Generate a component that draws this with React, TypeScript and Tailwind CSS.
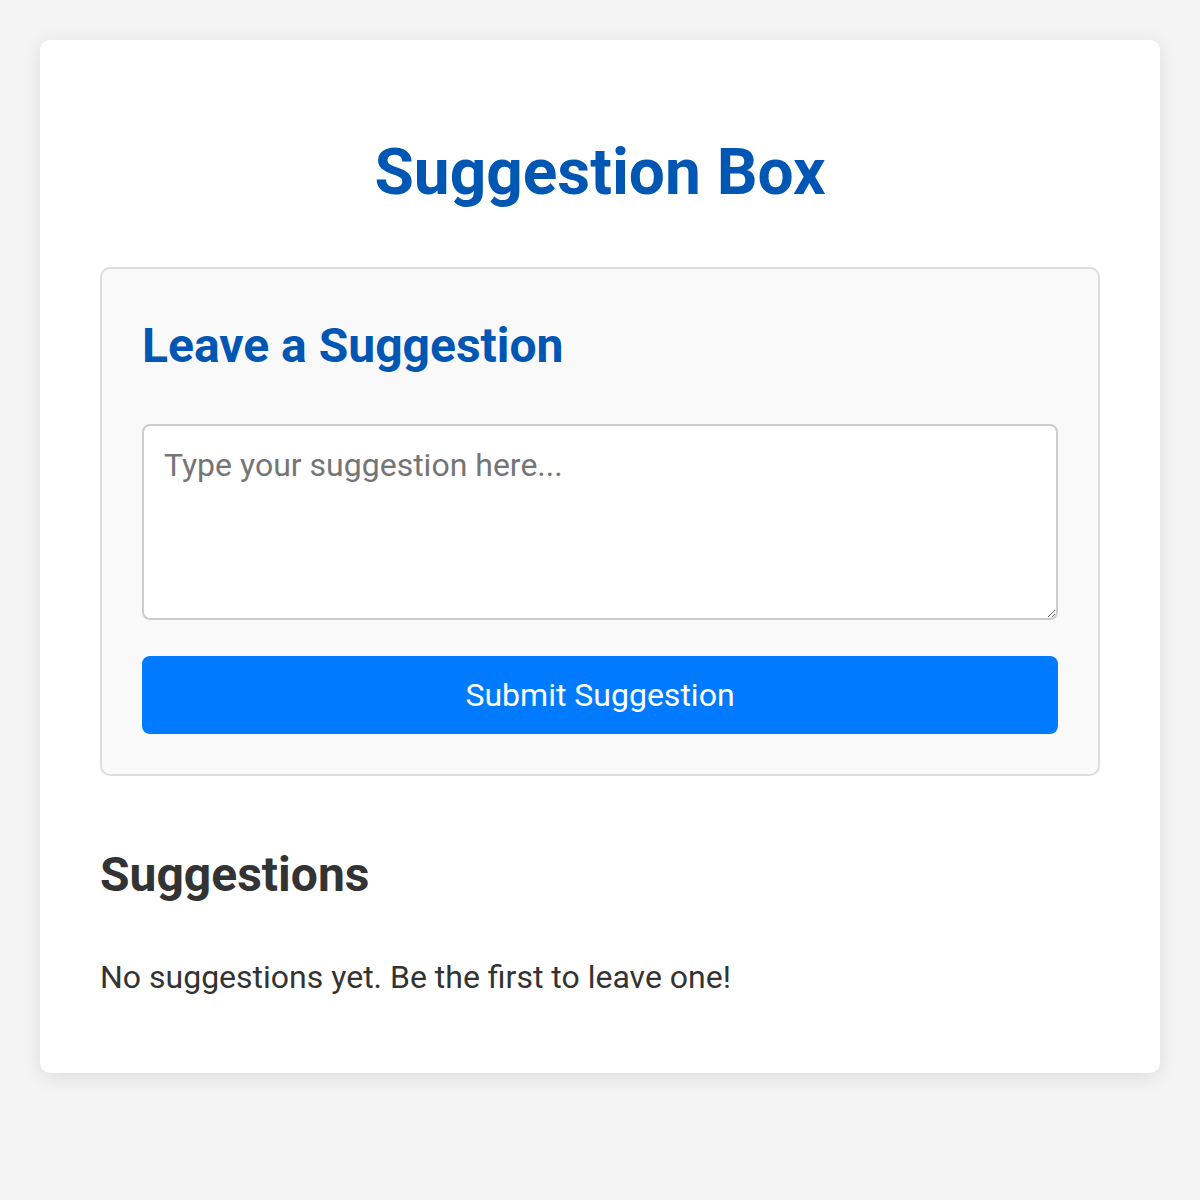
export default function App() {
  return (
    <div className="min-h-[1200px] bg-[#f4f4f4] px-10 pt-10" style={{ fontFamily: 'Roboto, "Liberation Sans", sans-serif' }}>
      <div className="rounded-[10px] bg-white px-[60px] pt-[60px] pb-[77px] shadow-[0_4px_20px_rgba(0,0,0,0.1)]">
        <h1 className="mt-[35px] text-center text-[64px] font-bold leading-[75px] text-[#0056b3]">Suggestion Box</h1>

        <div className="mt-[57px] rounded-[10px] border-2 border-[#dddddd] bg-[#f9f9f9] px-10 pt-10 pb-10">
          <h2 className="mt-[9px] text-[48px] font-bold leading-[56px] text-[#0056b3]">Leave a Suggestion</h2>
          <textarea
            className="mt-[50px] block h-[196px] w-full resize-y rounded-[8px] border-2 border-[#cccccc] bg-white px-5 pt-[21px] text-[32px] leading-[37px] text-[#333] placeholder:text-[#757575] focus:outline-none"
            placeholder="Type your suggestion here..."
          />
          <button className="mt-9 block h-[78px] w-full rounded-[8px] bg-[#007bff] text-[32px] text-white">
            Submit Suggestion
          </button>
        </div>

        <h2 className="mt-[71px] text-[48px] font-bold leading-[56px] text-[#333]">Suggestions</h2>
        <p className="mt-[56px] text-[32px] leading-[37px] text-[#333]">No suggestions yet. Be the first to leave one!</p>
      </div>
    </div>
  )
}
